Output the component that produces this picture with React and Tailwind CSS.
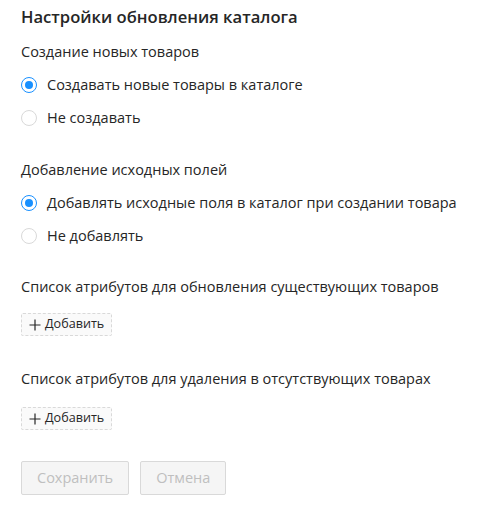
import React from "react";

function Radio({ checked, label }) {
  return (
    <label className="flex items-center gap-[10px] h-[22px] text-[14.5px] text-[#262626]">
      <span
        className={
          "w-4 h-4 rounded-full border flex items-center justify-center bg-white " +
          (checked ? "border-[#1890ff]" : "border-[#d9d9d9]")
        }
      >
        {checked && <span className="w-2 h-2 rounded-full bg-[#1890ff]" />}
      </span>
      <span>{label}</span>
    </label>
  );
}

function AddButton() {
  return (
    <button className="flex items-center gap-[4px] h-[23px] px-[7px] border border-dashed border-[#d9d9d9] bg-[#fafafa] rounded-[2px] text-[12.6px] text-[#262626] w-fit">
      <svg width="12" height="12" viewBox="0 0 12 12" fill="none" stroke="#262626" strokeWidth="1.2">
        <path d="M6 0.5v11M0.5 6h11" />
      </svg>
      <span>Добавить</span>
    </button>
  );
}

export default function App() {
  return (
    <div
      className="w-[503px] h-[509px] bg-white pl-[21px] pt-[5px]"
      style={{ fontFamily: '"Open Sans", "Noto Sans", sans-serif' }}
    >
      <h2 className="text-[16.6px] font-semibold text-[#262626] leading-[24px]">
        Настройки обновления каталога
      </h2>
      <div className="mt-[12px] text-[14.5px] text-[#262626] leading-[22px]">Создание новых товаров</div>
      <div className="mt-[11px] flex flex-col gap-[11px]">
        <Radio checked label="Создавать новые товары в каталоге" />
        <Radio label="Не создавать" />
      </div>
      <div className="mt-[30px] text-[14.5px] text-[#262626] leading-[22px]">Добавление исходных полей</div>
      <div className="mt-[11px] flex flex-col gap-[11px]">
        <Radio checked label="Добавлять исходные поля в каталог при создании товара" />
        <Radio label="Не добавлять" />
      </div>
      <div className="mt-[29px] text-[14.5px] text-[#262626] leading-[22px]">
        Список атрибутов для обновления существующих товаров
      </div>
      <div className="mt-[15px]">
        <AddButton />
      </div>
      <div className="mt-[32px] text-[14.5px] text-[#262626] leading-[22px]">
        Список атрибутов для удаления в отсутствующих товарах
      </div>
      <div className="mt-[17px]">
        <AddButton />
      </div>
      <div className="mt-[31px] flex gap-[11px]">
        <button className="h-[34px] px-[15px] border border-[#d9d9d9] bg-[#f5f5f5] rounded-[2px] text-[14.5px] text-[#bfbfbf]">
          Сохранить
        </button>
        <button className="h-[34px] px-[15px] border border-[#d9d9d9] bg-[#f5f5f5] rounded-[2px] text-[14.5px] text-[#bfbfbf]">
          Отмена
        </button>
      </div>
    </div>
  );
}
